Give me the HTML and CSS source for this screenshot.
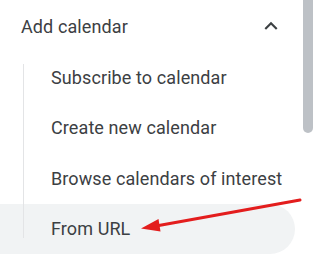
FILE: index.html
```html
<!DOCTYPE html>
<html lang="en">
<head>
    <meta charset="UTF-8">
    <meta name="viewport" content="width=device-width, initial-scale=1.0">
    <title>Add calendar</title>
    <link rel="stylesheet" href="styles.css">
</head>
<body>
    <div class="sidebar">
        <div class="section-header">
            <span class="section-title">Add calendar</span>
            <svg class="chevron" viewBox="0 0 24 24" width="26" height="26">
                <path d="M12 8l-6 6 1.41 1.41L12 10.83l4.59 4.58L18 14z"/>
            </svg>
        </div>
        <ul class="submenu">
            <li class="submenu-item">Subscribe to calendar</li>
            <li class="submenu-item">Create new calendar</li>
            <li class="submenu-item">Browse calendars of interest</li>
            <li class="submenu-item active">From URL</li>
        </ul>
    </div>
    <div class="scrollbar-thumb"></div>
    <svg class="annotation" width="320" height="262" viewBox="0 0 320 262">
        <line x1="300" y1="200" x2="156" y2="226" stroke="#e31d1d" stroke-width="3" stroke-linecap="round"/>
        <polygon points="141,228.5 158.5,219 160.5,231.5" fill="#e31d1d"/>
    </svg>
</body>
</html>
```

FILE: styles.css
```css
body {
    margin: 0;
    background: #fff;
    font-family: Roboto, "Noto Sans", Arial, sans-serif;
    color: #3c4043;
    overflow: hidden;
}
.sidebar {
    width: 300px;
}
.section-header {
    display: flex;
    align-items: center;
    justify-content: space-between;
    height: 52px;
    padding: 0 16px 0 21px;
}
.section-title {
    font-size: 18px;
    letter-spacing: 0.1px;
}
.chevron {
    fill: #3c4043;
}
.submenu {
    list-style: none;
    margin: 0;
    padding: 0;
    position: relative;
}
.submenu::before {
    content: '';
    position: absolute;
    left: 23px;
    top: 12px;
    bottom: 16px;
    width: 1px;
    background: #e3e4e6;
    z-index: 1;
}
.submenu-item {
    display: flex;
    align-items: center;
    height: 50.5px;
    padding-left: 51px;
    font-size: 18px;
    letter-spacing: 0.1px;
}
.submenu-item.active {
    width: 244px;
    background: #f1f3f4;
    border-radius: 0 26px 26px 0;
}
.scrollbar-thumb {
    position: absolute;
    top: -10px;
    left: 303px;
    width: 10px;
    height: 143px;
    background: #bdc1c6;
    border-radius: 5px;
}
.annotation {
    position: absolute;
    top: 0;
    left: 0;
    pointer-events: none;
}
```
